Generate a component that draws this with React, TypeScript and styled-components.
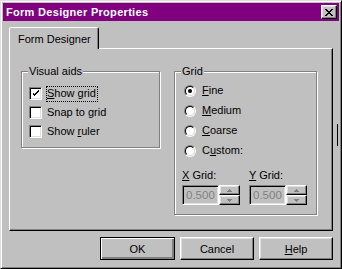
import { styled, createGlobalStyle } from "styled-components"

const GlobalStyle = createGlobalStyle`
    html, body {
        margin: 0;
        padding: 0;
        background: #c0c0c0;
    }
    body {
        font-family: "Liberation Sans", Arial, sans-serif;
        font-size: 11px;
        color: #000000;
    }
`

const Window = styled.div`
    box-sizing: border-box;
    width: 342px;
    height: 269px;
    padding: 2px;
    background: #c0c0c0;
    border-style: solid;
    border-width: 1px;
    border-color: #dfdfdf #000000 #000000 #dfdfdf;
    box-shadow: inset 1px 1px 0 #ffffff, inset -1px -1px 0 #808080;
    display: flex;
    flex-direction: column;
    position: relative;
`
const TitleBar = styled.div`
    height: 18px;
    background: #800080;
    display: flex;
    align-items: center;
    justify-content: space-between;
    padding: 0 2px 0 3px;
`
const Title = styled.span`
    color: #ffffff;
    font-weight: bold;
    font-size: 11px;
    letter-spacing: 0.3px;
`
const Raised = styled.div`
    box-sizing: border-box;
    background: #c0c0c0;
    border-style: solid;
    border-width: 1px;
    border-color: #ffffff #000000 #000000 #ffffff;
    box-shadow: inset -1px -1px 0 #808080, inset 1px 1px 0 #dfdfdf;
`
const CloseButton = styled(Raised)`
    width: 16px;
    height: 14px;
    display: flex;
    align-items: center;
    justify-content: center;
`
const Body = styled.div`
    flex: 1;
    display: flex;
    flex-direction: column;
    padding: 6px 6px 0 6px;
`
const TabStrip = styled.div`
    display: flex;
    height: 21px;
`
const Tab = styled.div`
    box-sizing: border-box;
    height: 22px;
    padding: 0 7px 0 8px;
    display: flex;
    align-items: center;
    background: #c0c0c0;
    border-style: solid;
    border-width: 1px 1px 0 1px;
    border-color: #ffffff #000000 transparent #ffffff;
    border-radius: 2px 2px 0 0;
    box-shadow: inset -1px 0 0 #808080;
    position: relative;
    z-index: 1;
`
const Panel = styled.div`
    box-sizing: border-box;
    height: 183px;
    border-style: solid;
    border-width: 1px;
    border-color: #ffffff #000000 #000000 #ffffff;
    box-shadow: inset -1px -1px 0 #808080;
    display: flex;
    align-items: flex-start;
    padding: 22px 0 0 11px;
    gap: 14px;
`
const Group = styled.div<{ $w: number; $h: number; $pt: number }>`
    box-sizing: border-box;
    position: relative;
    width: ${p => p.$w}px;
    height: ${p => p.$h}px;
    border: 1px solid #808080;
    box-shadow: inset 1px 1px 0 #ffffff, 1px 1px 0 #ffffff;
    padding: ${p => p.$pt}px 0 0 0;
`
const Legend = styled.span`
    position: absolute;
    top: -7px;
    left: 6px;
    padding: 0 1px;
    background: #c0c0c0;
    line-height: 13px;
`
const CheckRow = styled.div`
    height: 19px;
    display: flex;
    align-items: center;
    padding-left: 7px;
    gap: 4px;
`
const Sunken = styled.div`
    box-sizing: border-box;
    border-style: solid;
    border-width: 1px;
    border-color: #808080 #ffffff #ffffff #808080;
    box-shadow: inset 1px 1px 0 #000000, inset -1px -1px 0 #dfdfdf;
`
const CheckBox = styled(Sunken)`
    width: 13px;
    height: 13px;
    background: #ffffff;
    display: flex;
    align-items: center;
    justify-content: center;
`
const Label = styled.span<{ $focus?: boolean }>`
    border: 1px dotted ${p => (p.$focus ? "#000000" : "transparent")};
    padding: 0 1px 1px 0;
    line-height: 13px;
`
const Key = styled.span`
    text-decoration: underline;
    text-underline-offset: 1px;
`
const RadioRow = styled.div`
    height: 20px;
    display: flex;
    align-items: center;
    padding-left: 9px;
    gap: 5px;
`
const RadioOuter = styled.div`
    box-sizing: border-box;
    width: 12px;
    height: 12px;
    border-radius: 50%;
    border-style: solid;
    border-width: 1px;
    border-color: #808080 #ffffff #ffffff #808080;
    display: flex;
`
const RadioInner = styled.div`
    box-sizing: border-box;
    flex: 1;
    border-radius: 50%;
    border-style: solid;
    border-width: 1px;
    border-color: #000000 #dfdfdf #dfdfdf #000000;
    background: #ffffff;
    display: flex;
    align-items: center;
    justify-content: center;
`
const Dot = styled.div`
    width: 4px;
    height: 4px;
    border-radius: 50%;
    background: #000000;
`
const SpinArea = styled.div`
    display: flex;
    gap: 7px;
    padding: 8px 0 0 7px;
`
const SpinField = styled.div`
    display: flex;
    flex-direction: column;
    gap: 3px;
    width: 60px;
`
const SpinLabel = styled.span`
    line-height: 13px;
`
const SpinBox = styled.div`
    display: flex;
    height: 20px;
`
const SpinInput = styled(Sunken)`
    width: 37px;
    height: 20px;
    padding: 0 0 0 3px;
    display: flex;
    align-items: center;
    color: #808080;
    background: #c0c0c0;
    font-size: 11.5px;
    overflow: hidden;
    white-space: nowrap;
`
const SpinButtons = styled.div`
    display: flex;
    flex-direction: column;
    width: 21px;
`
const SpinBtn = styled(Raised)`
    height: 10px;
    display: flex;
    align-items: center;
    justify-content: center;
`
const ButtonRow = styled.div`
    display: flex;
    justify-content: flex-end;
    gap: 5px;
    padding-top: 6px;
`
const Button = styled(Raised)<{ $default?: boolean }>`
    width: ${p => (p.$default ? 75 : 74)}px;
    height: 23px;
    display: flex;
    align-items: center;
    justify-content: center;
    ${p =>
        p.$default &&
        `
        outline: 1px solid #000000;
        outline-offset: -1px;
        border-color: #000000;
        box-shadow: inset 1px 1px 0 #ffffff, inset -1px -1px 0 #808080, inset -2px -2px 0 #808080;
    `}
`
const Mark = styled.div`
    position: absolute;
    right: 3px;
    top: 123px;
    width: 1px;
    height: 22px;
    background: #000000;
`

function Check() {
    return (
        <svg width="7" height="7" viewBox="0 0 7 7" shapeRendering="crispEdges">
            <path d="M0 2h1v3h1v1h1v-1h1v-1h1v-1h1v-1h1v-2h-1v1h-1v1h-1v1h-1v1h-1v-1h-1v-1h-1z" fill="#000" />
        </svg>
    )
}

function Arrow({ up }: { up?: boolean }) {
    return (
        <svg width="5" height="3" viewBox="0 0 5 3" shapeRendering="crispEdges">
            <path d={up ? "M2 0h1v1h1v1h1v1h-5v-1h1v-1h1z" : "M0 0h5v1h-1v1h-1v1h-1v-1h-1v-1h-1z"} fill="#808080" />
        </svg>
    )
}

function Radio({ checked, children }: { checked?: boolean; children: React.ReactNode }) {
    return (
        <RadioRow>
            <RadioOuter>
                <RadioInner>{checked && <Dot />}</RadioInner>
            </RadioOuter>
            <Label>{children}</Label>
        </RadioRow>
    )
}

function Spin({ label }: { label: React.ReactNode }) {
    return (
        <SpinField>
            <SpinLabel>{label}</SpinLabel>
            <SpinBox>
                <SpinInput>0.500</SpinInput>
                <SpinButtons>
                    <SpinBtn><Arrow up /></SpinBtn>
                    <SpinBtn><Arrow /></SpinBtn>
                </SpinButtons>
            </SpinBox>
        </SpinField>
    )
}

export default function App() {
    return (
        <>
            <GlobalStyle />
            <Window>
                <TitleBar>
                    <Title>Form Designer Properties</Title>
                    <CloseButton>
                        <svg width="8" height="7" viewBox="0 0 8 7" shapeRendering="crispEdges">
                            <path d="M0 0h2v1h1v1h2v-1h1v-1h2v1h-1v1h-1v1h-1v1h1v1h1v1h1v1h-2v-1h-1v-1h-2v1h-1v1h-2v-1h1v-1h1v-1h1v-1h-1v-1h-1v-1h-1z" fill="#000" />
                        </svg>
                    </CloseButton>
                </TitleBar>
                <Body>
                    <TabStrip>
                        <Tab>Form Designer</Tab>
                    </TabStrip>
                    <Panel>
                        <Group $w={139} $h={77} $pt={12}>
                            <Legend>Visual aids</Legend>
                            <CheckRow>
                                <CheckBox><Check /></CheckBox>
                                <Label $focus><Key>S</Key>how grid</Label>
                            </CheckRow>
                            <CheckRow>
                                <CheckBox />
                                <Label>Snap to grid</Label>
                            </CheckRow>
                            <CheckRow>
                                <CheckBox />
                                <Label>Show <Key>r</Key>uler</Label>
                            </CheckRow>
                        </Group>
                        <Group $w={143} $h={144} $pt={9}>
                            <Legend>Grid</Legend>
                            <Radio checked><Key>F</Key>ine</Radio>
                            <Radio><Key>M</Key>edium</Radio>
                            <Radio><Key>C</Key>oarse</Radio>
                            <Radio>C<Key>u</Key>stom:</Radio>
                            <SpinArea>
                                <Spin label={<><Key>X</Key> Grid:</>} />
                                <Spin label={<><Key>Y</Key> Grid:</>} />
                            </SpinArea>
                        </Group>
                    </Panel>
                    <ButtonRow>
                        <Button $default>OK</Button>
                        <Button>Cancel</Button>
                        <Button><Key>H</Key>elp</Button>
                    </ButtonRow>
                </Body>
                <Mark />
            </Window>
        </>
    )
}
